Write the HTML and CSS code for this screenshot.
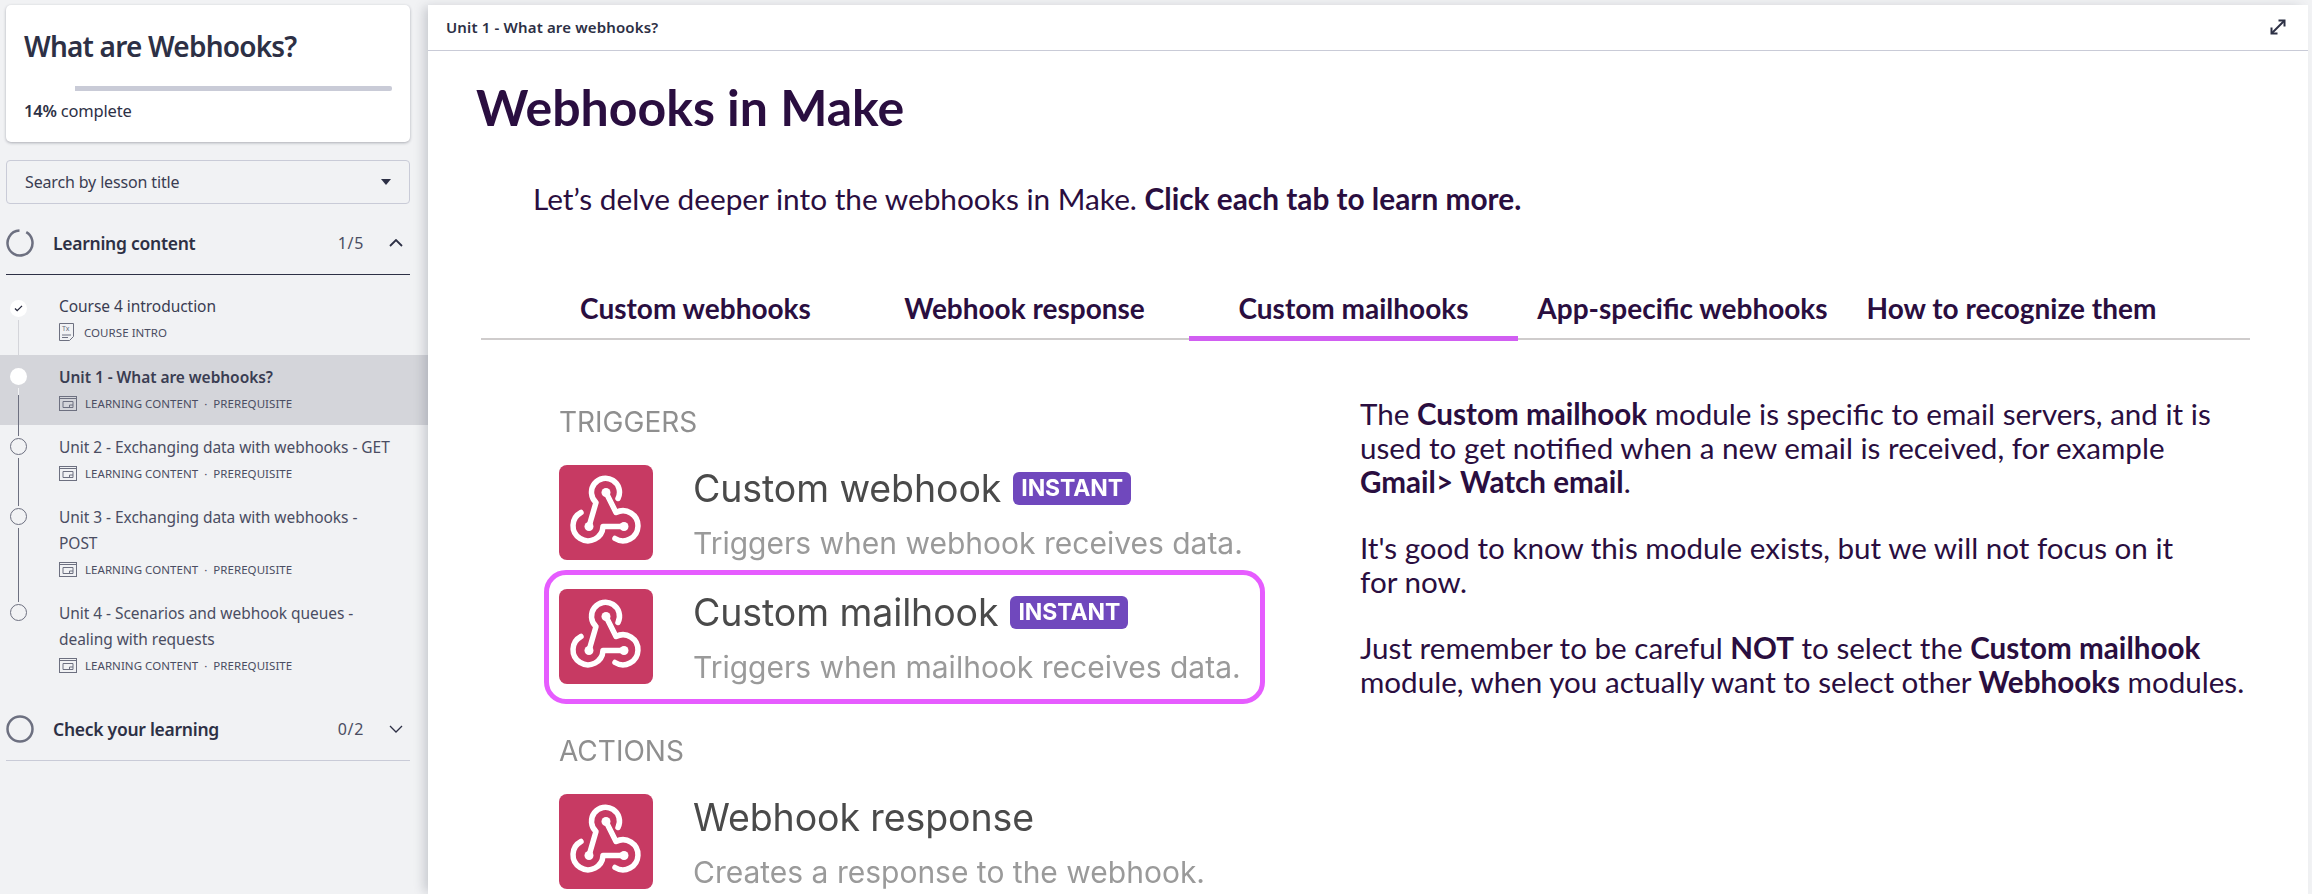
FILE: index.html
```html
<!DOCTYPE html>
<html lang="en">
<head>
<meta charset="utf-8">
<title>What are Webhooks?</title>
<link rel="stylesheet" href="styles.css">
</head>
<body>
<svg class="defs" width="0" height="0" aria-hidden="true">
  <symbol id="hook" viewBox="0 0 94 94">
    <g fill="none" stroke="#fff" stroke-width="5.5" stroke-linecap="round" stroke-linejoin="round">
      <path d="M59 33A14 14 0 1 0 37 37L30 61"/>
      <path d="M47 27L57 47A15 15 0 1 1 56 73"/>
      <path d="M65 61H44A15 15 0 1 1 22 47"/>
    </g>
    <circle cx="47" cy="27" r="4.5" fill="#fff"/>
    <circle cx="30" cy="61" r="4.5" fill="#fff"/>
    <circle cx="65" cy="61" r="4.5" fill="#fff"/>
  </symbol>
  <symbol id="lesson" viewBox="0 0 18 15">
    <g fill="none" stroke="currentColor">
      <rect x=".5" y=".5" width="17" height="14"/>
      <path d="M.5 2.500h17"/>
      <path d="M4 5.500h10v6H4z"/>
      <path d="M10.500 11.500v-2.500h3.500"/>
    </g>
  </symbol>
</svg>

<aside class="sidebar">
  <section class="card">
    <h1 class="course-title">What are Webhooks?</h1>
    <div class="progress"><div class="progress-track"></div></div>
    <p class="progress-label"><b>14%</b> complete</p>
  </section>

  <div class="search">
    <span>Search by lesson title</span>
    <i class="caret"></i>
  </div>

  <div class="group-head group-open">
    <svg class="ring" viewBox="0 0 28 28"><circle cx="14" cy="14" r="12.500" fill="none" stroke="#6d7080" stroke-width="2.500" stroke-dasharray="71 8" transform="rotate(-60 14 14)"/></svg>
    <span class="group-name">Learning content</span>
    <span class="group-count">1/5</span>
    <svg class="chev" viewBox="0 0 14 8"><path d="M1 7l6-6 6 6" fill="none" stroke="#2d3045" stroke-width="1.800"/></svg>
  </div>

  <ul class="lessons">
    <li class="lesson lesson-done">
      <div class="rail"><span class="node"><svg viewBox="0 0 10 8" class="tick"><path d="M1 4l2.500 2.500L9 1" fill="none" stroke="#23253a" stroke-width="1.500"/></svg></span><span class="wire wire-light"></span></div>
      <div class="lesson-body">
        <div class="lesson-title">Course 4 introduction</div>
        <div class="lesson-meta">
          <svg class="doc" viewBox="0 0 15 18"><g fill="none" stroke="currentColor"><path d="M.5.500h14v13l-4 4H.5z"/><path d="M3 12h9M3 14.500h6"/></g><text x="3" y="8" class="doc-t">Tx</text></svg>
          <span>COURSE INTRO</span>
        </div>
      </div>
    </li>
    <li class="lesson lesson-active">
      <div class="rail"><span class="node"></span><span class="wire wire-split"></span></div>
      <div class="lesson-body">
        <div class="lesson-title">Unit 1 - What are webhooks?</div>
        <div class="lesson-meta"><svg class="type"><use href="#lesson"/></svg><span>LEARNING CONTENT</span><span class="dot">·</span><span>PREREQUISITE</span></div>
      </div>
    </li>
    <li class="lesson">
      <div class="rail"><span class="node"></span><span class="wire"></span></div>
      <div class="lesson-body">
        <div class="lesson-title">Unit 2 - Exchanging data with webhooks - GET</div>
        <div class="lesson-meta"><svg class="type"><use href="#lesson"/></svg><span>LEARNING CONTENT</span><span class="dot">·</span><span>PREREQUISITE</span></div>
      </div>
    </li>
    <li class="lesson">
      <div class="rail"><span class="node"></span><span class="wire"></span></div>
      <div class="lesson-body">
        <div class="lesson-title">Unit 3 - Exchanging data with webhooks - POST</div>
        <div class="lesson-meta"><svg class="type"><use href="#lesson"/></svg><span>LEARNING CONTENT</span><span class="dot">·</span><span>PREREQUISITE</span></div>
      </div>
    </li>
    <li class="lesson">
      <div class="rail"><span class="node"></span></div>
      <div class="lesson-body">
        <div class="lesson-title">Unit 4 - Scenarios and webhook queues - dealing with requests</div>
        <div class="lesson-meta"><svg class="type"><use href="#lesson"/></svg><span>LEARNING CONTENT</span><span class="dot">·</span><span>PREREQUISITE</span></div>
      </div>
    </li>
  </ul>

  <div class="group-head group-closed">
    <svg class="ring" viewBox="0 0 28 28"><circle cx="14" cy="14" r="12.500" fill="none" stroke="#6d7080" stroke-width="2.500"/></svg>
    <span class="group-name">Check your learning</span>
    <span class="group-count">0/2</span>
    <svg class="chev" viewBox="0 0 14 8"><path d="M1 1l6 6 6-6" fill="none" stroke="#2d3045" stroke-width="1.300"/></svg>
  </div>
</aside>

<main class="main">
  <header class="topbar">
    <span class="topbar-title">Unit 1 - What are webhooks?</span>
    <svg class="expand" viewBox="0 0 18 18"><g fill="none" stroke="#2d3045" stroke-width="2"><path d="M3 15L15 3"/><path d="M9.500 2.500h6V8.500"/><path d="M2.500 9.500v6h6"/></g></svg>
  </header>

  <article class="content">
    <h2 class="headline">Webhooks in Make</h2>
    <p class="intro">Let’s delve deeper into the webhooks in Make. <b>Click each tab to learn more.</b></p>

    <nav class="tabs">
      <a class="tab">Custom webhooks</a>
      <a class="tab">Webhook response</a>
      <a class="tab tab-active">Custom mailhooks</a>
      <a class="tab">App-specific webhooks</a>
      <a class="tab">How to recognize them</a>
    </nav>

    <div class="panel">
      <figure class="shot">
        <div class="shot-cap">TRIGGERS</div>
        <div class="mod">
          <svg class="mod-icon"><use href="#hook"/></svg>
          <div class="mod-text">
            <div class="mod-name">Custom webhook <span class="badge">INSTANT</span></div>
            <div class="mod-sub">Triggers when webhook receives data.</div>
          </div>
        </div>
        <div class="mod mod-mark">
          <svg class="mod-icon"><use href="#hook"/></svg>
          <div class="mod-text">
            <div class="mod-name">Custom mailhook <span class="badge">INSTANT</span></div>
            <div class="mod-sub">Triggers when mailhook receives data.</div>
          </div>
        </div>
        <div class="shot-cap shot-cap-2">ACTIONS</div>
        <div class="mod">
          <svg class="mod-icon"><use href="#hook"/></svg>
          <div class="mod-text">
            <div class="mod-name">Webhook response</div>
            <div class="mod-sub">Creates a response to the webhook.</div>
          </div>
        </div>
      </figure>

      <div class="copy">
        <p>The <b>Custom mailhook</b> module is specific to email servers, and it is used to get notified when a new email is received, for example <b>Gmail&gt; Watch email</b>.</p>
        <p>It's good to know this module exists, but we will not focus on it for now.</p>
        <p>Just remember to be careful <b>NOT</b> to select the <b>Custom mailhook</b> module, when you actually want to select other <b>Webhooks</b> modules.</p>
      </div>
    </div>
  </article>
</main>
</body>
</html>
```
FILE: styles.css
```css
* { box-sizing: border-box; }
html, body { height: 100%; }
body {
  margin: 0;
  display: flex;
  height: 894px;
  overflow: hidden;
  background: #f1f2f4;
  font-family: "Noto Sans", "Liberation Sans", sans-serif;
  color: #2d3045;
}
.defs { position: absolute; }

/* sidebar */
.sidebar { width: 428px; flex: none; padding-top: 5px; }
.card {
  margin: 0 18px 0 6px;
  height: 137px;
  padding: 26px 18px 0;
  background: #fff;
  border-radius: 5px;
  box-shadow: 0 1px 3px rgba(40, 42, 60, .35);
}
.course-title { margin: 0; font-size: 28px; line-height: 30px; font-weight: 600; letter-spacing: -.8px; }
.progress { margin-top: 25px; padding-left: 51px; }
.progress-track { height: 5px; background: #c9cbd7; border-radius: 0 2px 2px 0; }
.progress-label { margin: 10px 0 0; font-size: 16.500px; line-height: 20px; letter-spacing: -.2px; }
.progress-label b { font-weight: 600; }
.search {
  margin: 18px 18px 0 6px;
  height: 44px;
  padding: 0 18px 0 18px;
  display: flex;
  align-items: center;
  justify-content: space-between;
  border: 1px solid #c9cbd7;
  border-radius: 4px;
  font-size: 16px;
  letter-spacing: -.15px;
  color: #3a3d52;
}
.caret { width: 0; height: 0; border: 5px solid transparent; border-top: 6px solid #2d3045; border-bottom: 0; }

.group-head {
  margin: 0 18px 0 6px;
  height: 55px;
  display: flex;
  align-items: center;
}
.group-open { margin-top: 16px; border-bottom: 1px solid #2d3045; padding-bottom: 8px; }
.group-closed { margin-top: 19px; border-bottom: 1px solid #c9cbd7; padding-bottom: 8px; }
.ring { width: 28px; height: 28px; flex: none; }
.group-name { margin-left: 19px; font-size: 17.500px; font-weight: 600; letter-spacing: -.27px; flex: 1; }
.group-count { font-size: 16px; color: #4a4d62; letter-spacing: .7px; }
.chev { width: 14px; height: 8px; margin: 0 7px 0 25px; flex: none; }

.lessons { list-style: none; margin: 0; padding: 0; }
.lesson {
  display: flex;
  padding: 0 0 0 10px;
  color: #4a4d62;
}
.lesson-done { color: #3a3d52; }
.lesson-active { background: #d4d5da; color: #3a3d52; }
.lesson-active .lesson-title { font-weight: 600; }
.rail { width: 17px; flex: none; display: flex; flex-direction: column; align-items: center; padding-top: 13px; }
.lesson-done .rail { padding-top: 25px; }
.lesson-done .lesson-body { padding-top: 18px; padding-bottom: 10px; }
.node {
  width: 17px; height: 17px;
  flex: none;
  border: 1px solid #6d7080;
  border-radius: 50%;
  background: #f1f2f4;
  display: flex;
  align-items: center;
  justify-content: center;
}
.lesson-done .node, .lesson-active .node { border: 0; background: #fff; }
.tick { width: 9px; height: 7px; }
.wire { width: 1px; flex: 1; margin: 3px 0 -11px; background: #6d7080; }
.wire-light { background: #d4d5da; }
.wire-split { background: linear-gradient(#f1f2f4 7px, #6d7080 7px); }
.lesson-body { flex: 1; padding: 9px 33px 9px 32px; min-width: 0; }
.lesson-title { font-size: 15.500px; line-height: 26px; letter-spacing: -.05px; }
.lesson-meta {
  display: flex;
  align-items: center;
  height: 26px;
  font-size: 11.500px;
  letter-spacing: .05px;
  color: #4a4d62;
}
.doc { width: 15px; height: 18px; margin-right: 10px; color: #6d7080; }
.doc-t { font-size: 7px; fill: #6d7080; }
.type { width: 18px; height: 15px; margin-right: 8px; color: #6d7080; }
.dot { margin: 0 6px; }

/* main */
.main {
  width: 1880px;
  flex: none;
  margin-top: 5px;
  height: 889px;
  background: #fff;
  box-shadow: -6px 0 10px -2px rgba(60, 62, 80, .22);
}
.topbar {
  height: 46px;
  padding: 0 21px 2px 18px;
  display: flex;
  align-items: center;
  justify-content: space-between;
  border-bottom: 1px solid #c9cbd7;
}
.topbar-title { font-size: 15px; font-weight: 600; letter-spacing: .15px; }
.expand { width: 18px; height: 18px; }

.content { padding: 0 58px 0 48px; color: #2a0e40; font-family: Lato, "Liberation Sans", sans-serif; }
.headline { margin: 26px 0 0; font-size: 50px; line-height: 60px; font-weight: 700; }
.intro { margin: 44px 0 0 57px; font-size: 29.800px; line-height: 36px; }
.intro b { font-weight: 700; }
.tabs {
  margin: 64px 0 0 5px;
  padding-left: 50px;
  display: flex;
  border-bottom: 2px solid #cfcccc;
}
.tab {
  width: 329px;
  height: 60px;
  margin-bottom: -3px;
  padding-top: 9px;
  text-align: center;
  font-size: 28px;
  line-height: 36px;
  font-weight: 700;
}
.tab-active { border-bottom: 5px solid #d15ff2; }

.panel { display: flex; }
.shot {
  width: 721px;
  margin: 63px 0 0 68px;
  flex: none;
  font-family: Inter, "Liberation Sans", sans-serif;
  filter: blur(.5px);
  color: #4a4a4a;
}
.shot-cap { margin-left: 15px; font-size: 28px; line-height: 38px; color: #8f8f8f; }
.shot-cap-2 { margin-top: 28px; }
.mod { display: flex; height: 95px; padding-left: 15px; margin-top: 24px; }
.mod-mark {
  margin: 10px 0 0;
  height: 134px;
  padding: 14px 10px 0 10px;
  border: 5px solid #e65cff;
  border-radius: 22px;
}
.mod-icon { width: 94px; height: 95px; flex: none; background: #c73a63; border-radius: 8px; }
.mod-text { margin-left: 40px; white-space: nowrap; }
.mod-name { display: flex; align-items: center; gap: 12px; height: 46px; font-size: 37.500px; letter-spacing: -.1px; }
.mod-sub { margin-top: 12px; font-size: 30px; line-height: 40px; color: #9a9a9a; }
.badge {
  height: 33px;
  padding: 0 8px;
  background: #7048bd;
  border-radius: 6px;
  color: #fff;
  font-size: 23px;
  line-height: 33px;
  font-weight: 700;
}
.copy { margin: 57px 0 0 95px; width: 890px; font-size: 29.600px; line-height: 34px; }
.copy p { margin: 0 0 32px; }
.copy p:nth-child(2) { padding-right: 50px; }
.copy b { font-weight: 700; }
```
